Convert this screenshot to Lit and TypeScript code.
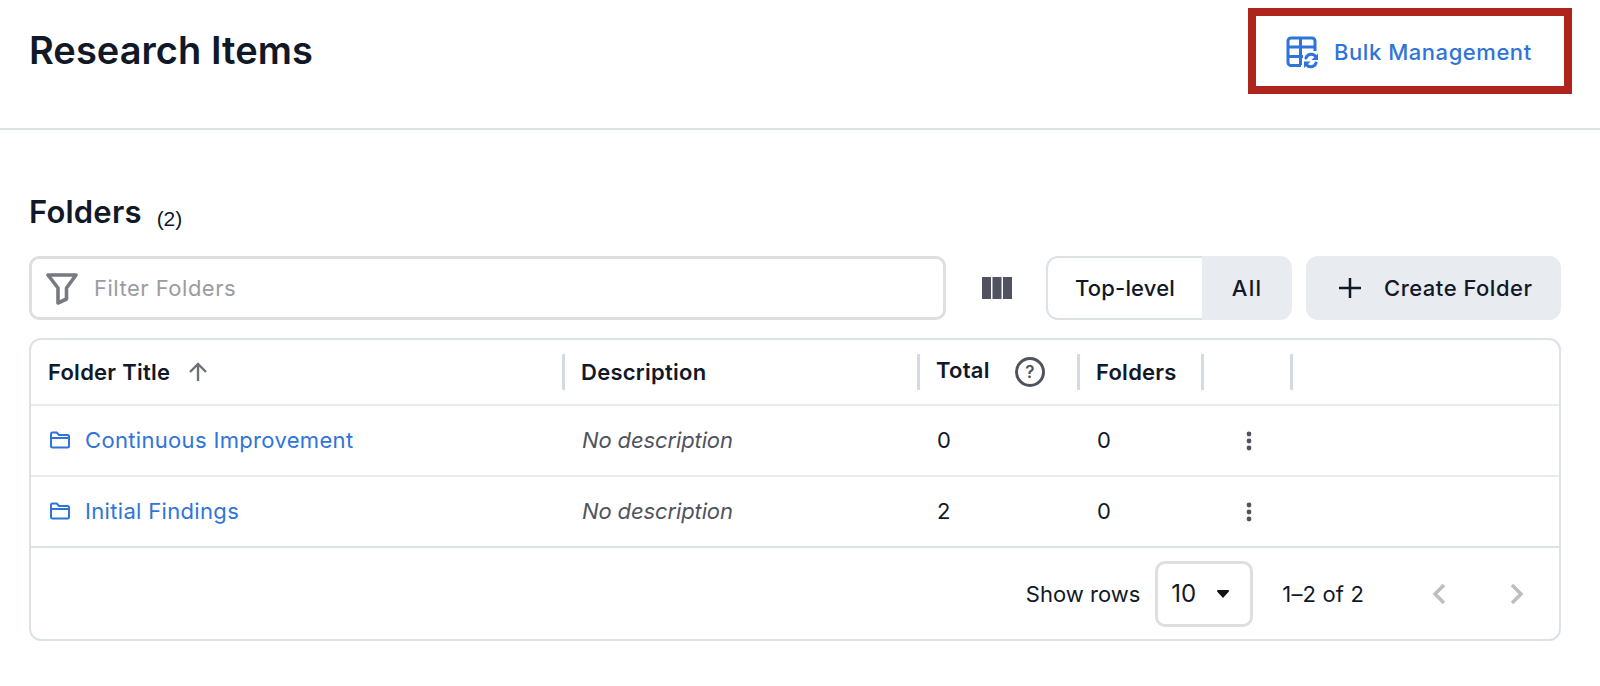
import { LitElement, html, css } from "lit";
import { customElement } from "lit/decorators.js";

const folder = html`<svg class="folder" viewBox="0 0 22 20" width="22" height="20" fill="none" stroke="currentColor" stroke-width="2" stroke-linejoin="round"><path d="M2 16V4a1.5 1.5 0 0 1 1.5-1.5h4.2L10 5h8.5A1.5 1.5 0 0 1 20 6.500V16a1.500 1.500 0 0 1-1.500 1.500h-15A1.500 1.500 0 0 1 2 16Z"/><path d="M2 8h18"/></svg>`;
const dots = html`<svg width="6" height="20" viewBox="0 0 6 20" fill="#50535e"><circle cx="3" cy="3" r="2.400"/><circle cx="3" cy="10" r="2.400"/><circle cx="3" cy="17" r="2.400"/></svg>`;

@customElement("app-root")
export class AppRoot extends LitElement {
  static styles = css`
    :host { display: block; width: 1600px; height: 686px; background: #fff; font-family: "Inter", "Noto Sans", sans-serif; color: #111827; overflow: hidden; }
    .top { height: 120px; border-bottom: 2px solid #dde2e8; display: flex; justify-content: space-between; align-items: flex-start; padding: 8px 28px 0 29px; box-sizing: content-box; }
    h1 { margin: 17px 0 0; font-size: 38px; font-weight: 600; line-height: 50px; letter-spacing: 0.05px; }
    .bulk { width: 324px; height: 86px; box-sizing: border-box; border: 8px solid #ad251c; display: flex; align-items: center; padding: 2px 0 0 30px; gap: 16px; color: #2f74d9; font-size: 22px; font-weight: 500; letter-spacing: 0.55px; }
    .sec { padding: 57px 39px 0 29px; }
    .sec-title { display: flex; align-items: flex-start; gap: 15px; height: 50px; }
    h2 { margin: 0; font-size: 31px; font-weight: 600; line-height: 50px; letter-spacing: 0.2px; }
    .count { font-family: "Liberation Sans", sans-serif; font-size: 21px; line-height: 24px; margin-top: 20px; }
    .bar { margin-top: 19px; display: flex; align-items: center; height: 64px; }
    .filter { width: 917px; height: 64px; box-sizing: border-box; border: 3px solid #dedfe1; border-radius: 10px; display: flex; align-items: center; padding-left: 14px; gap: 16px; color: #9a9ca3; font-size: 22px; letter-spacing: 0.5px; }
    .cols { margin-left: 36px; display: flex; }
    .toggle { margin-left: 34px; width: 246px; height: 64px; display: flex; font-size: 22px; font-weight: 500; }
    .toggle span { display: flex; align-items: center; justify-content: center; box-sizing: border-box; }
    .t1 { width: 156px; border: 2px solid #dde2e8; border-right: none; border-radius: 12px 0 0 12px; letter-spacing: 0.2px; }
    .t2 { flex: 1; background: #e8ebf0; border-radius: 0 12px 12px 0; letter-spacing: 1.2px; }
    .create { margin-left: 14px; width: 255px; height: 64px; border-radius: 12px; background: #e8ebf0; display: flex; align-items: center; padding-left: 32px; box-sizing: border-box; gap: 22px; font-size: 22px; font-weight: 500; letter-spacing: 0.5px; }
    .table { margin-top: 18px; width: 1532px; height: 303px; box-sizing: border-box; border: 2px solid #dde2e8; border-radius: 12px; }
    .row { display: grid; grid-template-columns: 531px 355px 160px 124px 89px 1fr; align-items: center; box-sizing: border-box; }
    .row.head { height: 66px; border-bottom: 2px solid #e8ebf0; font-size: 22px; font-weight: 600; letter-spacing: 0.25px; }
    .row.body { height: 71px; border-bottom: 2px solid #e8ebf0; font-size: 22px; }
    .row.body.last { border-bottom: 2px solid #dde2e8; }
    .cell { padding-left: 20px; padding-bottom: 2px; display: flex; align-items: center; }
    .head .cell { height: 36px; border-left: 3px solid #d3dae3; padding-left: 16px; padding-bottom: 0; }
    .head .cell:first-child { border-left: none; padding-left: 17px; }
    .link { color: #2f74d9; gap: 14px; letter-spacing: 0.33px; padding-left: 18px; }
    .desc { font-style: italic; color: #50535e; letter-spacing: -0.12px; }
    .row.body .menu { padding-left: 45px; padding-bottom: 0; }
    .total { padding-bottom: 4px; }
    .foot { height: 91px; display: flex; align-items: center; justify-content: flex-end; font-size: 22px; padding-right: 35px; }
    .sel { margin-left: 15px; width: 98px; height: 66px; box-sizing: border-box; border: 3px solid #dedfe1; border-radius: 10px; display: flex; align-items: center; padding-left: 13px; gap: 21px; font-size: 24px; }
    .range { margin-left: 29px; margin-right: 68px; letter-spacing: 0.15px; }
    .pgr { display: flex; gap: 64px; }
  `;

  render() {
    return html`
      <div class="top">
        <h1>Research Items</h1>
        <div class="bulk">
          <svg width="32" height="33" viewBox="0 0 32 33" fill="none" stroke="#2f74d9" stroke-width="3" stroke-linejoin="round"><path d="M15 29.500H5a3 3 0 0 1-3-3V5a3 3 0 0 1 3-3h21a3 3 0 0 1 3 3v10"/><path d="M2 11h27M2 20.500h15M14.500 2v27"/><path d="M20 22a5.500 5.500 0 0 1 10-1M30 27a5.500 5.500 0 0 1-10 1" stroke-width="3" stroke-linecap="round"/><path d="M32 17.500v6.500h-6.500z M18 32v-6.500h6.500z" fill="#2f74d9" stroke="none"/></svg>
          <span>Bulk Management</span>
        </div>
      </div>
      <div class="sec">
        <div class="sec-title"><h2>Folders</h2><span class="count">(2)</span></div>
        <div class="bar">
          <div class="filter">
            <svg width="32" height="33" viewBox="0 0 32 33" fill="none" stroke="#777a82" stroke-width="3.600" stroke-linejoin="round"><path d="M2 3h28L20.500 16v11L12 31V16Z"/></svg>
            <span>Filter Folders</span>
          </div>
          <div class="cols">
            <svg width="30" height="22" viewBox="0 0 30 22" fill="#50535e"><rect x="0" y="0" width="9" height="22"/><rect x="10.500" y="0" width="9" height="22"/><rect x="21" y="0" width="9" height="22"/></svg>
          </div>
          <div class="toggle"><span class="t1">Top-level</span><span class="t2">All</span></div>
          <div class="create">
            <svg width="24" height="24" viewBox="0 0 24 24" stroke="#111827" stroke-width="2.500"><path d="M12 2v20M1 12h22"/></svg>
            <span>Create Folder</span>
          </div>
        </div>
        <div class="table">
          <div class="row head">
            <div class="cell">Folder Title<svg style="margin-left:18px" width="20" height="20" viewBox="0 0 20 20" fill="none" stroke="#6f7178" stroke-width="2.400"><path d="M10 19V2M2 10l8-8 8 8"/></svg></div>
            <div class="cell">Description</div>
            <div class="cell"><span class="total">Total</span><svg style="margin-left:24px" width="32" height="32" viewBox="0 0 32 32" fill="none" stroke="#50535e" stroke-width="3"><circle cx="16" cy="16" r="13.500"/><text x="16" y="22" text-anchor="middle" font-size="17" font-weight="600" fill="#50535e" stroke="none">?</text></svg></div>
            <div class="cell">Folders</div>
            <div class="cell"></div>
            <div class="cell"></div>
          </div>
          <div class="row body">
            <div class="cell link">${folder}<span>Continuous Improvement</span></div>
            <div class="cell desc">No description</div>
            <div class="cell">0</div><div class="cell">0</div>
            <div class="cell menu">${dots}</div><div></div>
          </div>
          <div class="row body last">
            <div class="cell link">${folder}<span>Initial Findings</span></div>
            <div class="cell desc">No description</div>
            <div class="cell">2</div><div class="cell">0</div>
            <div class="cell menu">${dots}</div><div></div>
          </div>
          <div class="foot">
            <span>Show rows</span>
            <div class="sel"><span>10</span><svg width="12" height="8" viewBox="0 0 12 8"><path d="M1 0h10a1 1 0 0 1 .7 1.700L6 8 .3 1.700A1 1 0 0 1 1 0Z" fill="#111"/></svg></div>
            <span class="range">1–2 of 2</span>
            <div class="pgr">
              <svg width="14" height="22" viewBox="0 0 14 22" fill="none" stroke="#bcbec5" stroke-width="3.500"><path d="M12 2 3 11l9 9"/></svg>
              <svg width="14" height="22" viewBox="0 0 14 22" fill="none" stroke="#bcbec5" stroke-width="3.500"><path d="M2 2l9 9-9 9"/></svg>
            </div>
          </div>
        </div>
      </div>
    `;
  }
}
